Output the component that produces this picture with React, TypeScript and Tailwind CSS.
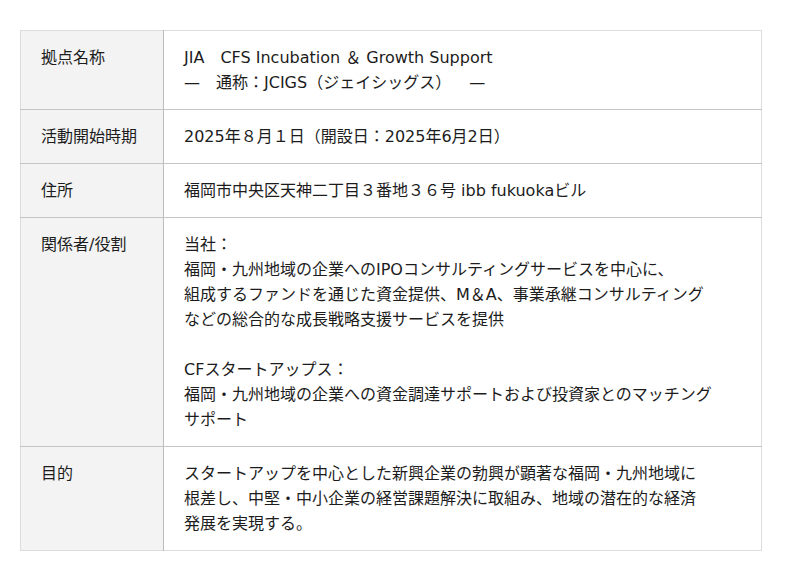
const rows: { label: string; lines: string[] }[] = [
  {
    label: '拠点名称',
    lines: ['JIA　CFS Incubation ＆ Growth Support', '—　通称：JCIGS（ジェイシッグス）　  —'],
  },
  {
    label: '活動開始時期',
    lines: ['2025年８月１日（開設日：2025年6月2日）'],
  },
  {
    label: '住所',
    lines: ['福岡市中央区天神二丁目３番地３６号 ibb fukuokaビル'],
  },
  {
    label: '関係者/役割',
    lines: [
      '当社：',
      '福岡・九州地域の企業へのIPOコンサルティングサービスを中心に、',
      '組成するファンドを通じた資金提供、M＆A、事業承継コンサルティング',
      'などの総合的な成長戦略支援サービスを提供',
      '',
      'CFスタートアップス：',
      '福岡・九州地域の企業への資金調達サポートおよび投資家とのマッチング',
      'サポート',
    ],
  },
  {
    label: '目的',
    lines: [
      'スタートアップを中心とした新興企業の勃興が顕著な福岡・九州地域に',
      '根差し、中堅・中小企業の経営課題解決に取組み、地域の潜在的な経済',
      '発展を実現する。',
    ],
  },
];

export default function App() {
  return (
    <div
      className="min-h-[581px] bg-white pt-[30px] pl-5 text-[16px] leading-[25px] text-[#1c1c1c]"
      style={{ fontFamily: '"DejaVu Sans", "Noto Sans CJK JP", sans-serif' }}
    >
      <table className="w-[742px] border-collapse border border-[#dcdcdc]">
        <tbody>
          {rows.map((r, i) => (
            <tr
              key={r.label}
              className={i > 0 ? 'border-t border-[#c4c4c4]' : ''}
            >
              <th className="w-[143px] bg-[#f3f3f3] border-r border-[#bdbdbd] px-5 py-[14px] text-left align-top font-normal">
                {r.label}
              </th>
              <td className="px-5 py-[14px] align-top">
                {r.lines.map((l, j) => (
                  <div key={j} className="h-[25px] whitespace-pre">
                    {l}
                  </div>
                ))}
              </td>
            </tr>
          ))}
        </tbody>
      </table>
    </div>
  );
}
